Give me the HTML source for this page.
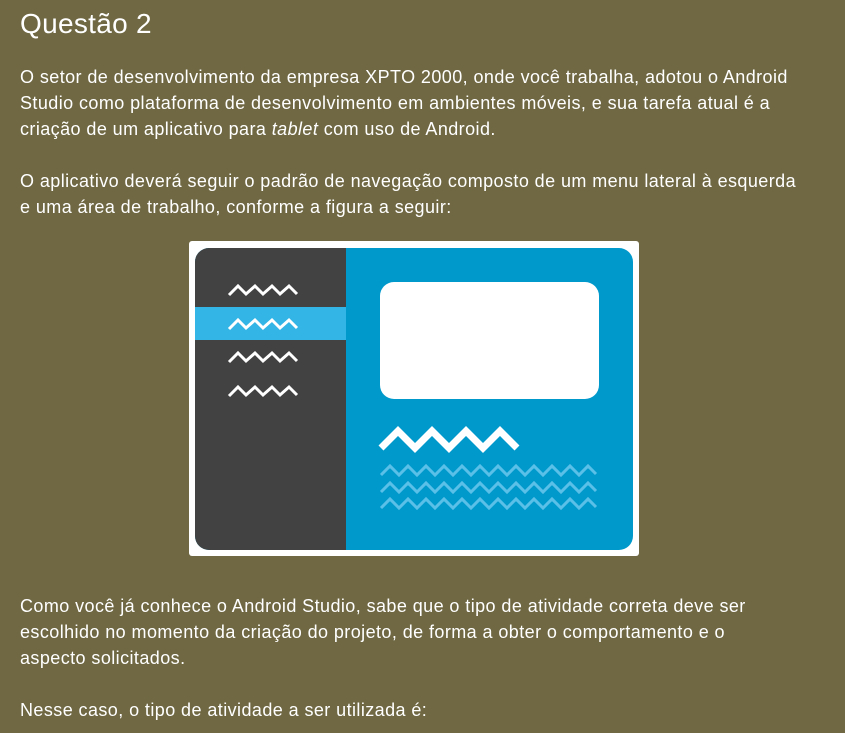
<!DOCTYPE html>
<html><head><style>
html,body{margin:0;padding:0;}
body{width:845px;height:733px;background:#6f6843;color:#fff;font-family:"Liberation Sans",sans-serif;position:relative;overflow:hidden;}
h1{position:absolute;left:20px;top:8px;margin:0;font-weight:normal;font-size:28px;letter-spacing:0.3px;}
p{position:absolute;left:20px;margin:0;font-size:18px;line-height:26px;width:825px;letter-spacing:0.42px;white-space:nowrap;}
</style></head><body>
<h1>Questão 2</h1>
<p style="top:64px">O setor de desenvolvimento da empresa XPTO 2000, onde você trabalha, adotou o Android<br>Studio como plataforma de desenvolvimento em ambientes móveis, e sua tarefa atual é a<br>criação de um aplicativo para <i>tablet</i> com uso de Android.</p>
<p style="top:168px">O aplicativo deverá seguir o padrão de navegação composto de um menu lateral à esquerda<br>e uma área de trabalho, conforme a figura a seguir:</p>
<svg style="position:absolute;left:189px;top:241px" width="450" height="315" viewBox="0 0 450 315">
<rect x="0" y="0" width="450" height="315" rx="3" fill="#fff"/>
<defs><clipPath id="c"><rect x="6" y="7" width="438" height="302" rx="14"/></clipPath></defs>
<g clip-path="url(#c)">
<rect x="6" y="7" width="438" height="302" fill="#0099cc"/>
<rect x="6" y="7" width="151" height="302" fill="#424242"/>
<rect x="6" y="66" width="151" height="33" fill="#33b5e5"/>
</g>
<rect x="191" y="41" width="219" height="117" rx="14" fill="#fff"/>
<g fill="none" stroke="#fff" stroke-width="3">
<path d="M40 54l9-9l8 8l9-8l8 8l9-8l8 8l9-8l8 8"/>
<path d="M40 88l9-9l8 8l9-8l8 8l9-8l8 8l9-8l8 8"/>
<path d="M40 121l9-9l8 8l9-8l8 8l9-8l8 8l9-8l8 8"/>
<path d="M40 155l9-9l8 8l9-8l8 8l9-8l8 8l9-8l8 8"/>
</g>
<path d="M192 207l17-17l17 17l17-17l17 17l17-17l17 17l17-17l17 17" fill="none" stroke="#fff" stroke-width="7"/>
<g fill="none" stroke="#5bc0e8" stroke-width="3">
<path id="w" d="M192 234l9-9l9 9l9-9l9 9l9-9l9 9l9-9l9 9l9-9l9 9l9-9l9 9l9-9l9 9l9-9l9 9l9-9l9 9l9-9l9 9l9-9l9 9l9-9l8 8"/>
<use href="#w" y="17"/>
<use href="#w" y="33"/>
</g>
</svg>
<p style="top:593px">Como você já conhece o Android Studio, sabe que o tipo de atividade correta deve ser<br>escolhido no momento da criação do projeto, de forma a obter o comportamento e o<br>aspecto solicitados.</p>
<p style="top:697px">Nesse caso, o tipo de atividade a ser utilizada é:</p>
</body></html>
